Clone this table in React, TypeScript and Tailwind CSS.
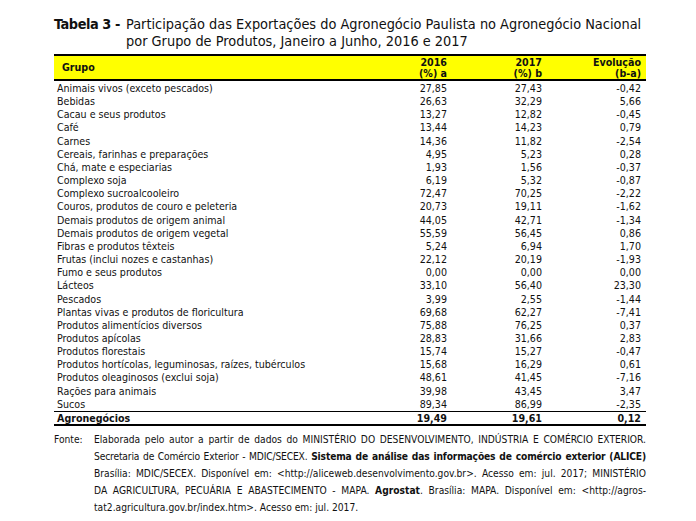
import React from "react";

const rows: [string, string, string, string][] = [
  ["Animais vivos (exceto pescados)", "27,85", "27,43", "-0,42"],
  ["Bebidas", "26,63", "32,29", "5,66"],
  ["Cacau e seus produtos", "13,27", "12,82", "-0,45"],
  ["Café", "13,44", "14,23", "0,79"],
  ["Carnes", "14,36", "11,82", "-2,54"],
  ["Cereais, farinhas e preparações", "4,95", "5,23", "0,28"],
  ["Chá, mate e especiarias", "1,93", "1,56", "-0,37"],
  ["Complexo soja", "6,19", "5,32", "-0,87"],
  ["Complexo sucroalcooleiro", "72,47", "70,25", "-2,22"],
  ["Couros, produtos de couro e peleteria", "20,73", "19,11", "-1,62"],
  ["Demais produtos de origem animal", "44,05", "42,71", "-1,34"],
  ["Demais produtos de origem vegetal", "55,59", "56,45", "0,86"],
  ["Fibras e produtos têxteis", "5,24", "6,94", "1,70"],
  ["Frutas (inclui nozes e castanhas)", "22,12", "20,19", "-1,93"],
  ["Fumo e seus produtos", "0,00", "0,00", "0,00"],
  ["Lácteos", "33,10", "56,40", "23,30"],
  ["Pescados", "3,99", "2,55", "-1,44"],
  ["Plantas vivas e produtos de floricultura", "69,68", "62,27", "-7,41"],
  ["Produtos alimentícios diversos", "75,88", "76,25", "0,37"],
  ["Produtos apícolas", "28,83", "31,66", "2,83"],
  ["Produtos florestais", "15,74", "15,27", "-0,47"],
  ["Produtos hortícolas, leguminosas, raízes, tubérculos", "15,68", "16,29", "0,61"],
  ["Produtos oleaginosos (exclui soja)", "48,61", "41,45", "-7,16"],
  ["Rações para animais", "39,98", "43,45", "3,47"],
  ["Sucos", "89,34", "86,99", "-2,35"],
];

const font = { fontFamily: '"DejaVu Sans Condensed", "DejaVu Sans", sans-serif' };

export default function App() {
  return (
    <div
      className="w-[696px] h-[521px] bg-white text-[#111] pt-[16px] pl-[54px] overflow-hidden"
      style={font}
    >
      <div className="flex text-[14.4px] leading-[17px] w-[620px]">
        <div className="w-[72px] shrink-0 font-bold whitespace-nowrap tracking-[-0.45px]">Tabela 3 -</div>
        <div className="whitespace-nowrap">
          <div>Participação das Exportações do Agronegócio Paulista no Agronegócio Nacional</div>
          <div>por Grupo de Produtos, Janeiro a Junho, 2016 e 2017</div>
        </div>
      </div>

      <div className="mt-[4px] w-[592px] text-[10.6px]">
        <div className="grid grid-cols-[297px_97px_96px_1fr] bg-[#ffff00] border-t-2 border-b-2 border-black font-bold leading-[11px] h-[27px]">
          <div className="pl-[8px] flex items-center">Grupo</div>
          <div className="text-right pr-[1px] pt-[1px]">2016<br />(%) a</div>
          <div className="text-right pr-[2px] pt-[1px]">2017<br />(%) b</div>
          <div className="text-right pr-[5px] pt-[1px]">Evolução<br />(b-a)</div>
        </div>
        <div className="pt-[1px]">
          {rows.map((r) => (
            <div key={r[0]} className="grid grid-cols-[297px_97px_96px_1fr] leading-[13.16px]">
              <div className="pl-[3px] whitespace-nowrap">{r[0]}</div>
              <div className="text-right pr-[1px]">{r[1]}</div>
              <div className="text-right pr-[2px]">{r[2]}</div>
              <div className="text-right pr-[5px]">{r[3]}</div>
            </div>
          ))}
        </div>
        <div className="grid grid-cols-[297px_97px_96px_1fr] border-t border-black border-b-2 font-bold leading-[12px]">
          <div className="pl-[3px]">Agronegócios</div>
          <div className="text-right pr-[1px]">19,49</div>
          <div className="text-right pr-[2px]">19,61</div>
          <div className="text-right pr-[5px]">0,12</div>
        </div>
      </div>

      <div className="mt-[5px] w-[592px] flex text-[10.2px] leading-[17px]">
        <div className="w-[40px] shrink-0">Fonte:</div>
        <div className="flex-1">
          <div className="text-justify [text-align-last:justify] whitespace-nowrap">
            Elaborada pelo autor a partir de dados do MINISTÉRIO DO DESENVOLVIMENTO, INDÚSTRIA E COMÉRCIO EXTERIOR.
          </div>
          <div className="text-justify [text-align-last:justify] whitespace-nowrap tracking-[-0.15px]">
            Secretaria de Comércio Exterior - MDIC/SECEX.{" "}
            <b>Sistema de análise das informações de comércio exterior (ALICE)</b>
          </div>
          <div className="text-justify [text-align-last:justify] whitespace-nowrap">
            Brasília: MDIC/SECEX. Disponível em: &lt;http://aliceweb.desenvolvimento.gov.br&gt;. Acesso em: jul. 2017; MINISTÉRIO
          </div>
          <div className="text-justify [text-align-last:justify] whitespace-nowrap">
            DA AGRICULTURA, PECUÁRIA E ABASTECIMENTO - MAPA. <b>Agrostat</b>. Brasília: MAPA. Disponível em: &lt;http://agros-
          </div>
          <div className="whitespace-nowrap">tat2.agricultura.gov.br/index.htm&gt;. Acesso em: jul. 2017.</div>
        </div>
      </div>
    </div>
  );
}
